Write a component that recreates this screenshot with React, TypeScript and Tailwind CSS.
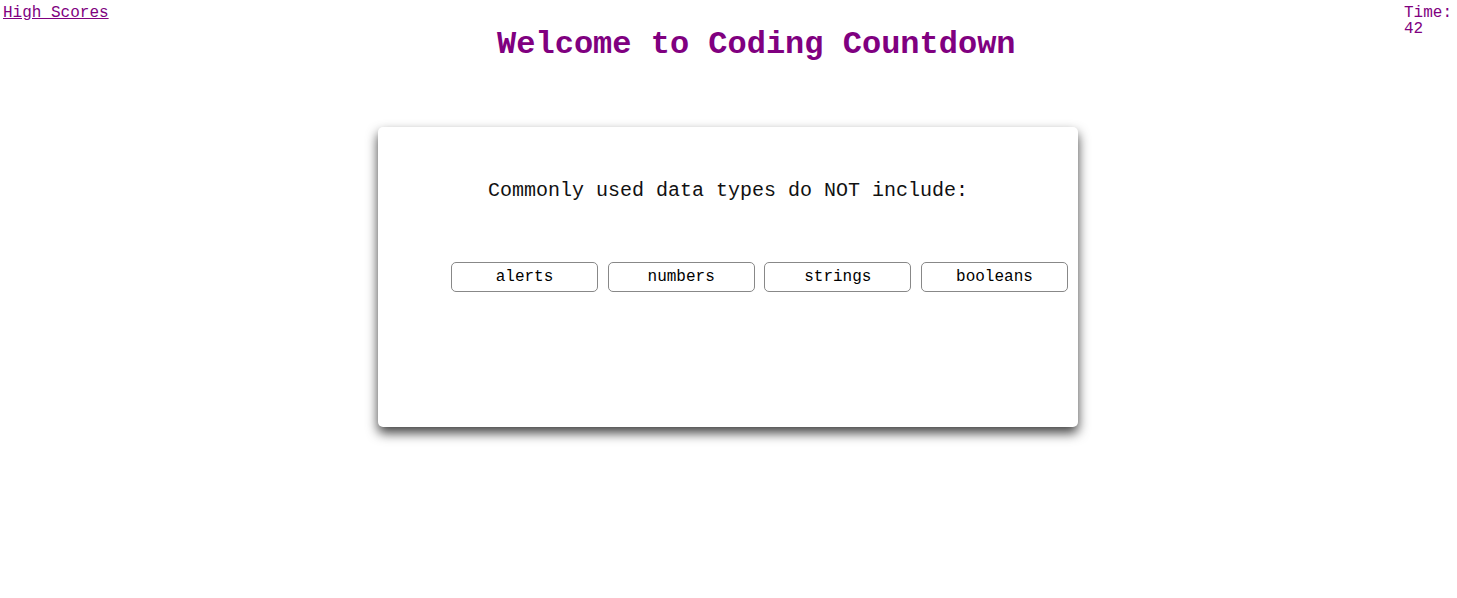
import React from "react";

const answers = ["alerts", "numbers", "strings", "booleans"];

export default function App() {
  return (
    <div className="min-h-screen bg-white font-['Liberation_Mono','Courier_New',monospace]">
      <header className="flex items-start justify-between">
        <a href="#" className="pl-[3px] pt-[5px] text-[16px] leading-[16px] text-[#800080] underline">
          High Scores
        </a>
        <h1 className="mt-[27px] text-[32px] font-bold leading-[36px] text-[#800080]">
          Welcome to Coding Countdown
        </h1>
        <div className="w-[53px] pt-[5px] text-[16px] leading-[16px] text-[#800080]">
          Time: 42
        </div>
      </header>

      <main className="mt-[64px] flex justify-center pr-px">
        <div className="h-[300px] w-[700px] rounded-[5px] bg-white shadow-[0_6px_12px_rgba(0,0,0,0.75)]">
          <p className="mt-[52px] text-center text-[20px] leading-[24px] text-[#111]">
            Commonly used data types do NOT include:
          </p>
          <div className="mt-[59px] flex gap-[9.67px] pl-[73px]">
            {answers.map((a) => (
              <button
                key={a}
                className="h-[30px] w-[147px] rounded-[5px] border border-[#888] bg-white text-[16px] text-black"
              >
                {a}
              </button>
            ))}
          </div>
        </div>
      </main>
    </div>
  );
}
